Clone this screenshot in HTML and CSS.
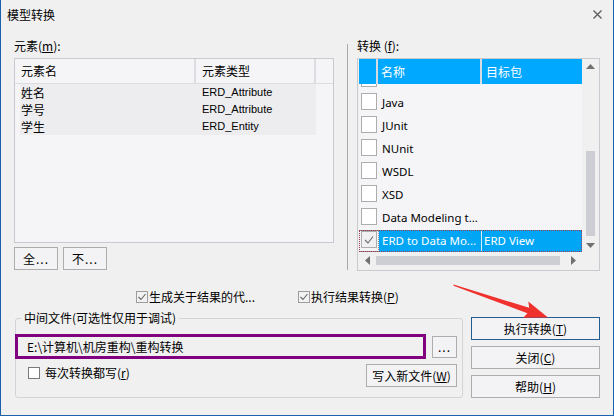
FILE: index.html
```html
<!DOCTYPE html>
<html lang="zh">
<head>
<meta charset="utf-8">
<title>模型转换</title>
<link rel="stylesheet" href="styles.css">
</head>
<body>
<div class="window">
  <div class="titlebar">
    <span class="title">模型转换</span>
    <svg class="close" width="9" height="9" viewBox="0 0 9 9"><path d="M0.5 0.5 L8.5 8.5 M8.5 0.5 L0.5 8.5" stroke="#5f5f5f" stroke-width="1.4" fill="none"/></svg>
  </div>
  <div class="body">
    <div class="top">
      <div class="left">
        <div class="label">元素(<u>m</u>):</div>
        <div class="elist">
          <div class="ehead">
            <div class="hc c1">元素名</div>
            <div class="hc c2">元素类型</div>
            <div class="hc c3"></div>
          </div>
          <div class="erows">
            <div class="erow"><span class="ec1">姓名</span><span class="ec2">ERD_Attribute</span></div>
            <div class="erow"><span class="ec1">学号</span><span class="ec2">ERD_Attribute</span></div>
            <div class="erow"><span class="ec1">学生</span><span class="ec2">ERD_Entity</span></div>
          </div>
        </div>
        <div class="btnrow">
          <button class="btn sbtn">全...</button>
          <button class="btn sbtn">不...</button>
        </div>
      </div>
      <div class="vsep"></div>
      <div class="right">
        <div class="label">转换 (<u>f</u>):</div>
        <div class="tlist">
          <div class="tview">
            <div class="thead">
              <div class="th th0"></div>
              <div class="th th1">名称</div>
              <div class="th th2">目标包</div>
            </div>
            <div class="trows">
              <div class="tinner">
                <div class="trow"><div class="tc0"><span class="cb"></span></div><div class="tc1"></div><div class="tc2"></div></div>
                <div class="trow"><div class="tc0"><span class="cb"></span></div><div class="tc1">Java</div><div class="tc2"></div></div>
                <div class="trow"><div class="tc0"><span class="cb"></span></div><div class="tc1">JUnit</div><div class="tc2"></div></div>
                <div class="trow"><div class="tc0"><span class="cb"></span></div><div class="tc1">NUnit</div><div class="tc2"></div></div>
                <div class="trow"><div class="tc0"><span class="cb"></span></div><div class="tc1">WSDL</div><div class="tc2"></div></div>
                <div class="trow"><div class="tc0"><span class="cb"></span></div><div class="tc1">XSD</div><div class="tc2"></div></div>
                <div class="trow"><div class="tc0"><span class="cb"></span></div><div class="tc1">Data Modeling t...</div><div class="tc2"></div></div>
                <div class="trow sel"><div class="tc0"><span class="cb checked"><svg width="14" height="15" viewBox="0 0 14 15"><polyline points="3,8 6,11 11,4.5" fill="none" stroke="#6a6a6a" stroke-width="1.1"/></svg></span></div><div class="tc1">ERD to Data Mo...</div><div class="tc2">ERD View</div></div>
              </div>
            </div>
          </div>
          <div class="vscroll">
            <div class="arrowbox"><svg width="9" height="5" viewBox="0 0 9 5"><polygon points="0,5 4.5,0 9,5" fill="#707070"/></svg></div>
            <div class="vtrack"><div class="vthumb"></div></div>
            <div class="arrowbox down"><svg width="9" height="5" viewBox="0 0 9 5"><polygon points="0,0 4.5,5 9,0" fill="#707070"/></svg></div>
          </div>
          <div class="hscroll">
            <div class="harrow"><svg width="5" height="9" viewBox="0 0 5 9"><polygon points="5,0 0,4.5 5,9" fill="#707070"/></svg></div>
            <div class="htrack"><div class="hthumb"></div></div>
            <div class="harrow"><svg width="5" height="9" viewBox="0 0 5 9"><polygon points="0,0 5,4.5 0,9" fill="#707070"/></svg></div>
          </div>
          <div class="corner"></div>
        </div>
      </div>
    </div>

    <div class="optrow">
      <label class="opt opt1"><span class="scb"><svg width="10" height="10" viewBox="0 0 10 10"><polyline points="1.5,5 4,7.5 8.5,2" fill="none" stroke="#666" stroke-width="1.1"/></svg></span>生成关于结果的代...</label>
      <label class="opt"><span class="scb"><svg width="10" height="10" viewBox="0 0 10 10"><polyline points="1.5,5 4,7.5 8.5,2" fill="none" stroke="#666" stroke-width="1.1"/></svg></span>执行结果转换(<u>P</u>)</label>
    </div>

    <div class="bottom">
      <fieldset class="group">
        <legend>中间文件(可选性仅用于调试)</legend>
        <div class="pathrow">
          <div class="path">E:\计算机\机房重构\重构转换</div>
          <button class="btn dots">...</button>
        </div>
        <div class="grow2">
          <label class="opt each"><span class="scb white"></span>每次转换都写(<u>r</u>)</label>
          <button class="btn wbtn">写入新文件(<u>W</u>)</button>
        </div>
      </fieldset>
      <div class="btncol">
        <button class="btn big default">执行转换(<u>T</u>)</button>
        <button class="btn big">关闭(<u>C</u>)</button>
        <button class="btn big">帮助(<u>H</u>)</button>
      </div>
    </div>
  </div>
  <svg class="redarrow" width="614" height="416" viewBox="0 0 614 416">
    <polygon points="453.5,284.5 529.2,307.8 528.3,301.5 548,317.5 523.3,317.8 527.4,313.2 453.5,285.8" fill="#f0322e"/>
  </svg>
</div>
</body>
</html>
```

FILE: styles.css
```css
* { box-sizing: border-box; }
html, body { margin: 0; padding: 0; }
body {
  width: 614px;
  height: 416px;
  overflow: hidden;
  background: #f0f0f0;
  font-family: "Noto Sans CJK SC", "Noto Sans", sans-serif;
  font-size: 12px;
  color: #000;
}
u { text-decoration: underline; text-underline-offset: 1px; }

.window {
  position: relative;
  width: 614px;
  height: 416px;
  background: #f0f0f0;
  border: 1px solid #1b62ad;
  border-top: 0;
}

.titlebar {
  height: 29px;
  display: flex;
  align-items: center;
  justify-content: space-between;
  padding: 0 11px 0 6px;
}
.title { font-size: 12px; line-height: 14px; }

.body { padding: 9px 12px 0 13px; }

.top { display: flex; align-items: flex-start; }
.left { width: 320px; }
.label { height: 16px; line-height: 16px; margin-bottom: 4px; white-space: nowrap; }

.elist {
  height: 185px;
  border: 1px solid #c9c9cf;
  background: #f5f5f7;
}
.ehead {
  display: flex;
  height: 25px;
  border-bottom: 1px solid #dcdce2;
}
.hc { line-height: 24px; padding-left: 6px; white-space: nowrap; }
.c1 { width: 181px; border-right: 2px solid #dcdce2; }
.c2 { width: 120px; border-right: 2px solid #dcdce2; }
.c3 { flex: 1; }
.erows { margin-left: 5px; width: 296px; background: #ededf0; }
.erow { display: flex; height: 17px; line-height: 17px; }
.ec1 { width: 181px; padding-left: 1px; }
.ec2 { padding-left: 1px; font-family: "Liberation Sans", sans-serif; font-size: 11px; }

.btnrow { display: flex; gap: 5px; margin-top: 4px; }

.btn {
  font-family: "Noto Sans CJK SC", "Noto Sans", sans-serif;
  font-size: 12px;
  color: #000;
  background: #f3f3f5;
  border: 1px solid #adadad;
  padding: 0;
  margin: 0;
  height: 23px;
  line-height: 20px;
}
.sbtn { width: 44px; letter-spacing: 1px; }

.vsep { width: 1px; height: 226px; margin: 6px 9px 0 13px; background: #a9a9ad; }

.right { width: 243px; }
.tlist {
  height: 213px;
  border: 1px solid #c9c9cf;
  padding: 0 0 1px 1px;
  background: #f0f0f0;
  display: grid;
  grid-template-columns: 223px 17px;
  grid-template-rows: 193px 17px;
}
.tview { background: #f5f5f7; overflow: hidden; }
.thead { display: flex; height: 25px; background: #00a8ff; color: #fff; }
.th { line-height: 25px; white-space: nowrap; }
.th0 { width: 19px; border-right: 2px solid #d6dbe2; }
.th1 { width: 104px; padding-left: 3px; border-right: 2px solid #d6dbe2; }
.th2 { flex: 1; padding-left: 4px; }

.trows { height: 168px; overflow: hidden; }
.tinner { margin-top: -15px; }
.trow {
  display: flex;
  height: 23px;
  font-family: "Noto Sans", "Noto Sans CJK SC", sans-serif;
  font-size: 11.5px;
  line-height: 21px;
  white-space: nowrap;
}
.tc0 { width: 20px; padding: 1px 0 0 2px; }
.tc1 { width: 103px; padding-left: 3px; overflow: hidden; }
.tc2 { flex: 1; padding-left: 3px; }
.cb {
  display: block;
  width: 16px;
  height: 17px;
  background: #fff;
  border: 1px solid #adadad;
}
.trow.sel { height: 22px; outline: 1px dotted #9a3a55; outline-offset: -1px; }
.trow.sel .tc0 { border: 1px dotted #8a8a8a; padding: 0 0 0 1px; }
.trow.sel .cb { background: #f0f0f2; }
.trow.sel .tc1 { background: #00a6f6; color: #fff; border-right: 1px solid #d8eefc; }
.trow.sel .tc2 { background: #00a6f6; color: #fff; padding-left: 2px; }

.vscroll { display: flex; flex-direction: column; background: #f0f0f0; }
.arrowbox { height: 17px; display: flex; align-items: center; justify-content: center; }
.arrowbox.down { align-items: flex-end; padding-bottom: 4px; }
.vtrack { flex: 1; display: flex; justify-content: center; }
.vthumb { width: 9px; height: 85px; margin-top: 76px; background: #cdcdd4; }

.hscroll { display: flex; align-items: center; background: #f0f0f0; }
.harrow { width: 17px; height: 17px; display: flex; align-items: center; justify-content: center; }
.htrack { flex: 1; display: flex; align-items: center; }
.hthumb { width: 184px; height: 9px; background: #cdcdd4; }
.corner { background: #f0f0f0; }

.optrow { display: flex; margin-top: 18px; padding-left: 122px; height: 16px; }
.opt { display: flex; align-items: center; line-height: 16px; white-space: nowrap; }
.opt1 { width: 162px; }
.scb {
  width: 12px;
  height: 12px;
  border: 1px solid #9d9d9d;
  background: #f2f2f2;
  margin-right: 1px;
  display: flex;
  align-items: center;
  justify-content: center;
}
.scb.white { background: #fff; border-color: #7a7a7a; margin-right: 5px; }

.bottom { display: flex; align-items: flex-start; gap: 8px; margin-top: 6px; }
.group {
  width: 448px;
  height: 87px;
  margin: 0 0 0 1px;
  padding: 9px 5px 0 0;
  border: 1px solid #d3d3d9;
  border-radius: 3px;
  min-width: 0;
}
.group legend {
  margin-left: 5px;
  padding: 0 3px;
  line-height: 14px;
  font-size: 12px;
  white-space: nowrap;
}
.pathrow { display: flex; align-items: center; }
.path {
  width: 411px;
  height: 25px;
  margin-left: -1px;
  border: 3px solid #800080;
  padding-left: 9px;
  line-height: 19px;
  white-space: nowrap;
}
.dots { width: 25px; height: 22px; margin-left: 6px; line-height: 16px; letter-spacing: 1px; }
.grow2 { display: flex; justify-content: space-between; align-items: flex-start; margin-top: 5px; }
.each { padding-left: 12px; margin-top: 1px; }
.wbtn { width: 91px; }

.btncol { display: flex; flex-direction: column; gap: 6px; margin-top: 6px; width: 129px; }
.big { width: 129px; }
.default { border-color: #235b93; }

.redarrow { position: absolute; left: -1px; top: 0; pointer-events: none; }
```
